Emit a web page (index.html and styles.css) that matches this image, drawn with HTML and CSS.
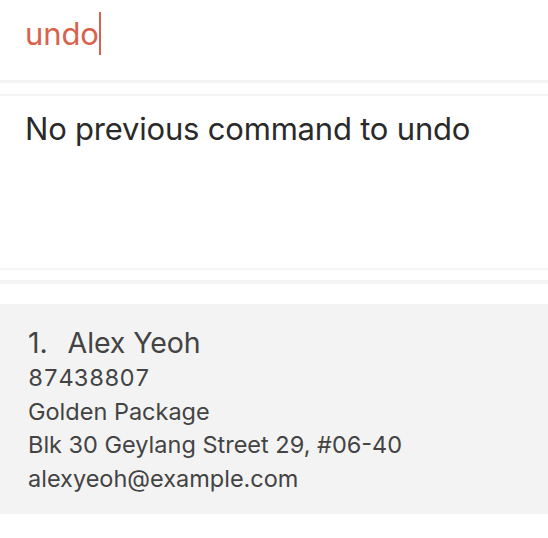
FILE: index.html
```html
<!DOCTYPE html>
<html>
<head>
<meta charset="utf-8">
<link rel="stylesheet" href="styles.css">
</head>
<body>
<div class="app">
  <div class="command-box">
    <span class="command-text">undo</span><span class="caret"></span>
  </div>
  <div class="sep sep-top"></div>
  <div class="result-wrap">
    <div class="result-box">No previous command to undo</div>
  </div>
  <div class="list-wrap">
    <div class="card">
      <div class="name-row"><span class="index">1.</span><span class="name">Alex Yeoh</span></div>
      <div class="detail phone">87438807</div>
      <div class="detail">Golden Package</div>
      <div class="detail">Blk 30 Geylang Street 29, #06-40</div>
      <div class="detail">alexyeoh@example.com</div>
    </div>
  </div>
</div>
</body>
</html>
```
FILE: styles.css
```css
html, body {
  margin: 0;
  padding: 0;
  background: #ffffff;
}
body {
  font-family: "Inter", "Noto Sans", sans-serif;
  width: 548px;
  height: 538px;
  overflow: hidden;
}
.app {
  display: flex;
  flex-direction: column;
}
.command-box {
  height: 80px;
  display: flex;
  align-items: flex-start;
  padding-left: 25px;
  box-sizing: border-box;
}
.command-text {
  font-size: 31px;
  letter-spacing: -0.1px;
  color: #d9624d;
  line-height: 36px;
  margin-top: 16px;
}
.caret {
  display: inline-block;
  width: 2px;
  height: 43px;
  margin-top: 12px;
  margin-left: 0;
  background: #d9624d;
}
.sep {
  background: #f4f4f4;
}
.sep-top {
  height: 3px;
}
.result-wrap {
  padding-top: 11px;
}
.result-box {
  border-top: 2px solid #f4f4f4;
  border-bottom: 2px solid #f4f4f4;
  padding: 15px 0 0 25px;
  font-size: 31px;
  letter-spacing: -0.2px;
  line-height: 36px;
  color: #2a2a2a;
  box-sizing: border-box;
  height: 176px;
}
.list-wrap {
  margin-top: 10px;
  border-top: 4px solid #f4f4f4;
  padding-top: 20px;
}
.card {
  background: #f3f3f3;
  height: 210px;
  box-sizing: border-box;
  padding: 21px 0 0 28px;
  color: #434343;
}
.name-row {
  font-size: 28.5px;
  letter-spacing: -0.1px;
  line-height: 36px;
  display: flex;
  gap: 20px;
}
.detail {
  font-size: 23.5px;
  letter-spacing: 0;
  line-height: 33.6px;
}
.phone {
  font-variant-numeric: tabular-nums;
}
```
